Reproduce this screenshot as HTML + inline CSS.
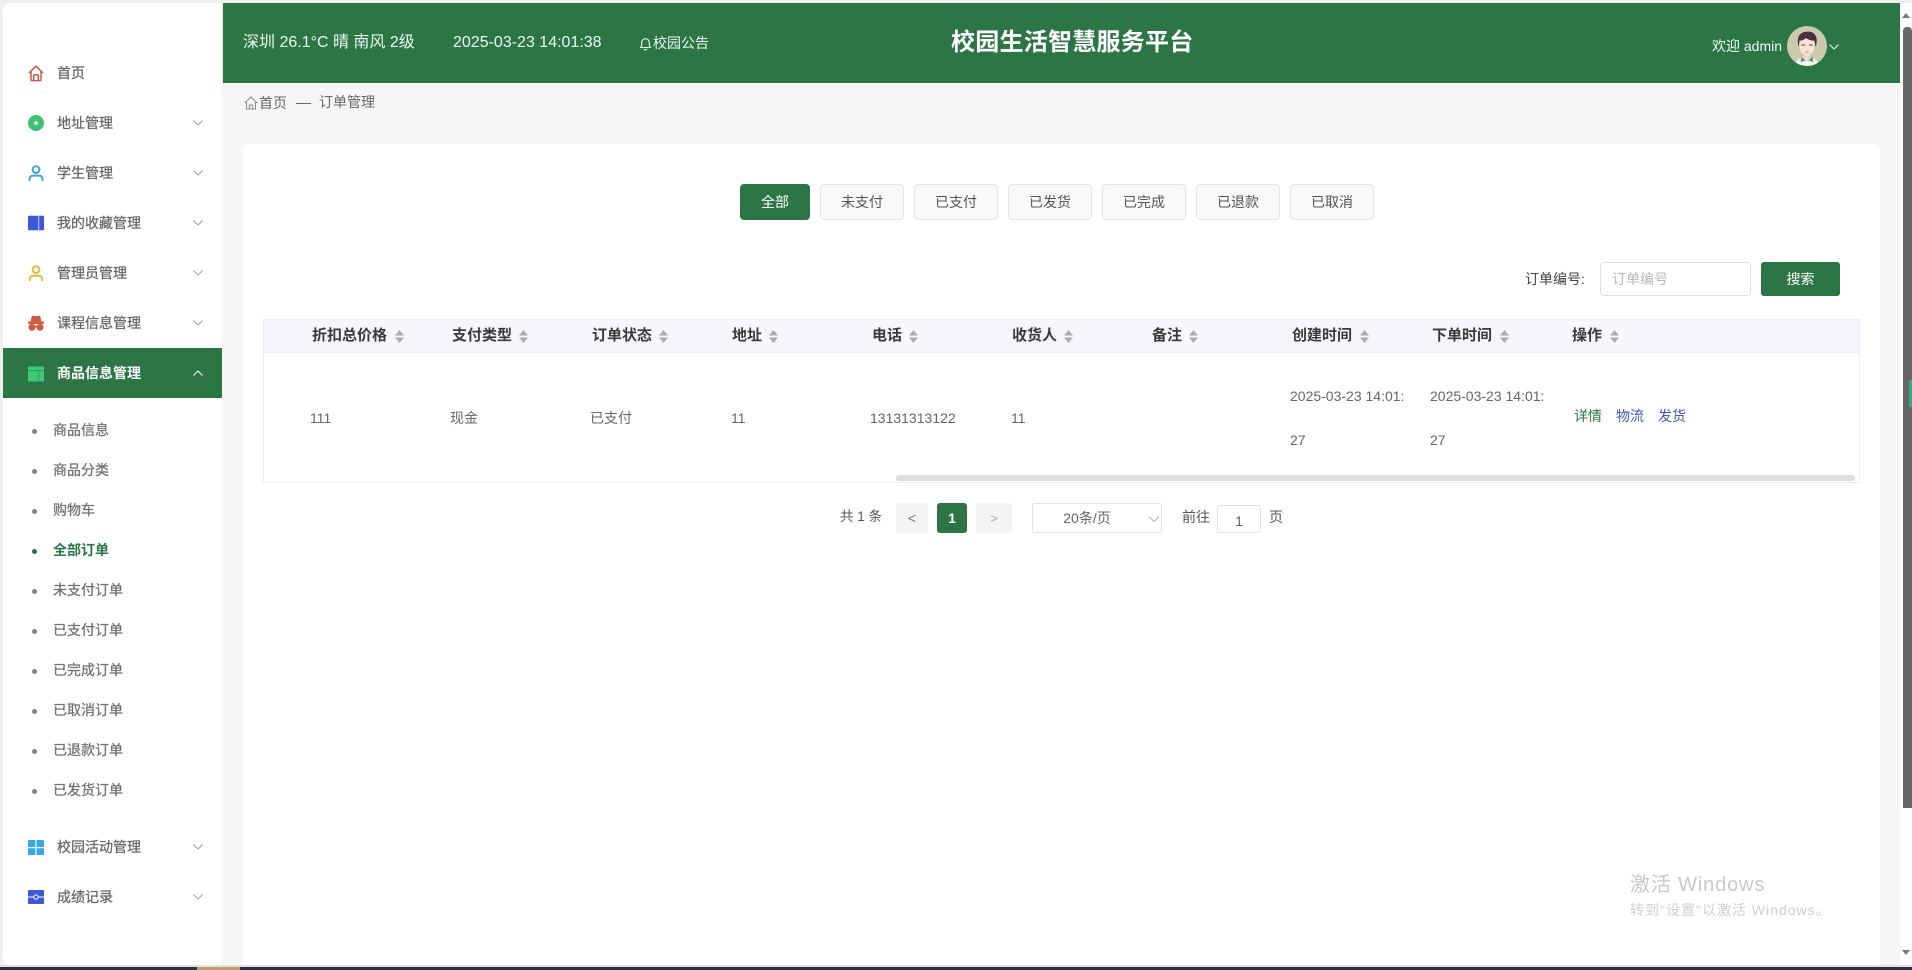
<!DOCTYPE html>
<html lang="zh-CN"><head><meta charset="utf-8"><title>校园生活智慧服务平台</title>
<style>
*{box-sizing:border-box;margin:0;padding:0}
html,body{width:1912px;height:970px;overflow:hidden;background:#f0f0f1;font-family:"Liberation Sans","Noto Sans CJK SC",sans-serif;font-size:14px;color:#606266}
.a{position:absolute;white-space:nowrap}
.t{position:absolute;white-space:nowrap;line-height:20px;height:20px}
.m{position:absolute;left:57px;line-height:20px;height:20px;color:#666;font-size:14px;white-space:nowrap;-webkit-text-stroke:.25px #666}
.ic{position:absolute;left:28px;width:16px;height:16px}
.ch{position:absolute;left:192px;width:12px;height:8px}
.s{position:absolute;left:53px;line-height:20px;height:20px;color:#707070;font-size:14px;white-space:nowrap;-webkit-text-stroke:.25px #707070}
.d{position:absolute;left:32px;width:5px;height:5px;border-radius:50%;background:#808080}
.b{position:absolute;top:184px;width:84px;height:36px;line-height:34px;text-align:center;background:#f9f9f9;border:1px solid #e4e5e7;border-radius:4px;color:#555;font-size:14px}
.h{position:absolute;top:326px;line-height:20px;font-size:15px;font-weight:700;color:#3a3a3a;white-space:nowrap}
.so{position:absolute;top:330px;width:9px;height:13px}
.c{position:absolute;line-height:20px;font-size:14px;color:#666;white-space:nowrap}
</style></head><body>

<!-- sidebar -->
<div class="a" style="left:3px;top:3px;width:219px;height:963px;background:#fff;border-radius:8px 0 0 8px"></div>
<svg class="ic" style="top:65px;height:17px" viewBox="0 0 16 17" fill="none" stroke="#c2594e" stroke-width="1.5"><path d="M1 8 8 1.2 15 8M3 6.5V14.6q0 1 1 1h8q1 0 1-1V6.5"/><path d="M5.7 15.5V11q0-1.2 1.2-1.2h2.2q1.2 0 1.2 1.2v4.5"/></svg>
<div class="m" style="top:63px">首页</div>
<svg class="ic" style="top:115px" viewBox="0 0 16 16"><circle cx="8" cy="8" r="8" fill="#3cc273"/><circle cx="8" cy="8" r="1.9" fill="#fff"/></svg>
<div class="m" style="top:113px">地址管理</div>
<svg class="ic" style="top:165px" viewBox="0 0 16 16" fill="none" stroke="#45a3de" stroke-width="2"><circle cx="8" cy="4.6" r="3.4"/><path d="M1.5 16v-1.5Q1.5 10.6 5.5 10.6h5q4 0 4 3.9V16"/></svg>
<div class="m" style="top:163px">学生管理</div>
<svg class="ic" style="top:215px" viewBox="0 0 16 16"><rect width="16" height="14.5" y=".8" rx="1" fill="#3f57d9"/><rect x="10.2" y=".8" width="1" height="14.5" fill="#c5cdf5"/></svg>
<div class="m" style="top:213px">我的收藏管理</div>
<svg class="ic" style="top:265px" viewBox="0 0 16 16" fill="none" stroke="#e0bb45" stroke-width="2"><circle cx="8" cy="4.6" r="3.4"/><path d="M1.8 16v-1.5Q1.8 10.8 5.5 10.8h5q3.7 0 3.7 3.7V16"/></svg>
<div class="m" style="top:263px">管理员管理</div>
<svg class="ic" style="top:315px" viewBox="0 0 16 16" fill="#cf5a45"><path d="M2.500 7 3.500 2Q4 .4 5.500.7L8 1.200l2.500-.5Q12 .4 12.500 2l1 5z"/><rect y="6.500" width="16" height="2.500" rx="1"/><circle cx="4" cy="12.300" r="3.500"/><circle cx="12" cy="12.300" r="3.500"/><rect x="6" y="10.500" width="4" height="2"/></svg>
<div class="m" style="top:313px">课程信息管理</div>
<div class="a" style="left:3px;top:348px;width:219px;height:50px;background:#2c7645"></div>
<svg class="ic" style="top:366px" viewBox="0 0 16 15"><rect width="16" height="15" fill="#3dc877"/><rect y="3.600" width="16" height="1" fill="#2c9a5c"/><rect x="10.500" y="4.600" width=".8" height="10.400" fill="#2c9a5c"/></svg>
<div class="m" style="top:363px;color:#fff;font-weight:700;-webkit-text-stroke:0">商品信息管理</div>

<svg class="ch" style="top:119px" viewBox="0 0 12 8" fill="none" stroke="#a0a0a0"><path d="M1.500 1.500 6 6l4.500-4.500"/></svg>
<svg class="ch" style="top:169px" viewBox="0 0 12 8" fill="none" stroke="#a0a0a0"><path d="M1.500 1.500 6 6l4.500-4.500"/></svg>
<svg class="ch" style="top:219px" viewBox="0 0 12 8" fill="none" stroke="#a0a0a0"><path d="M1.500 1.500 6 6l4.500-4.500"/></svg>
<svg class="ch" style="top:269px" viewBox="0 0 12 8" fill="none" stroke="#a0a0a0"><path d="M1.500 1.500 6 6l4.500-4.500"/></svg>
<svg class="ch" style="top:319px" viewBox="0 0 12 8" fill="none" stroke="#a0a0a0"><path d="M1.500 1.500 6 6l4.500-4.500"/></svg>
<svg class="ch" style="top:369px" viewBox="0 0 12 8" fill="none" stroke="#fff"><path d="M1.500 6.500 6 2l4.500 4.500"/></svg>

<div class="d" style="top:429px"></div><div class="s" style="top:420px">商品信息</div>
<div class="d" style="top:469px"></div><div class="s" style="top:460px">商品分类</div>
<div class="d" style="top:509px"></div><div class="s" style="top:500px">购物车</div>
<div class="d" style="top:549px;background:#2c7645"></div><div class="s" style="top:540px;color:#2c7645;font-weight:700;-webkit-text-stroke:0">全部订单</div>
<div class="d" style="top:589px"></div><div class="s" style="top:580px">未支付订单</div>
<div class="d" style="top:629px"></div><div class="s" style="top:620px">已支付订单</div>
<div class="d" style="top:669px"></div><div class="s" style="top:660px">已完成订单</div>
<div class="d" style="top:709px"></div><div class="s" style="top:700px">已取消订单</div>
<div class="d" style="top:749px"></div><div class="s" style="top:740px">已退款订单</div>
<div class="d" style="top:789px"></div><div class="s" style="top:780px">已发货订单</div>

<svg class="ic" style="top:840px;height:15px" viewBox="0 0 16 15"><path fill="#36a8e6" d="M0 1q0-1 1-1h6.300v7H0zM8.500 0H15q1 0 1 1v6H8.500zM0 8.200h7.300V15H1q-1 0-1-1zM8.500 8.200H16V14q0 1-1 1H8.500z"/></svg>
<div class="m" style="top:837px">校园活动管理</div>
<svg class="ch" style="top:843px" viewBox="0 0 12 8" fill="none" stroke="#a0a0a0"><path d="M1.500 1.500 6 6l4.500-4.500"/></svg>
<svg class="ic" style="top:890px;height:14px" viewBox="0 0 16 14"><rect width="16" height="14" rx="1" fill="#3f57d9"/><rect y="6.500" width="5.500" height="1" fill="#fff"/><rect x="10.500" y="6.500" width="5.500" height="1" fill="#fff"/><circle cx="8" cy="7" r="2.100" fill="none" stroke="#fff"/></svg>
<div class="m" style="top:887px">成绩记录</div>
<svg class="ch" style="top:893px" viewBox="0 0 12 8" fill="none" stroke="#a0a0a0"><path d="M1.500 1.500 6 6l4.500-4.500"/></svg>

<!-- main bg -->
<div class="a" style="left:222px;top:83px;width:1678px;height:882px;background:#f6f6f7"></div>

<!-- header -->
<div class="a" style="left:223px;top:3px;width:1677px;height:80px;background:#2c7645"></div>
<div class="t" style="left:243px;top:32px;font-size:16px;line-height:22px;height:22px;color:#eafaf0">深圳 26.1°C 晴 南风 2级</div>
<div class="t" style="left:453px;top:32px;font-size:16px;line-height:22px;height:22px;color:#eafaf0">2025-03-23 14:01:38</div>
<svg class="a" style="left:639px;top:37px" width="13" height="14" viewBox="0 0 13 14" fill="none" stroke="#eafaf0" stroke-width="1.100"><path d="M1.500 10.500h10L10.300 8.500V5.500a3.800 3.800 0 0 0-7.600 0v3z"/><path d="M4.800 12.700h3.400"/></svg>
<div class="t" style="left:653px;top:33px;color:#eafaf0">校园公告</div>
<div class="t" style="left:951px;top:26px;font-size:24px;font-weight:700;line-height:34px;height:34px;color:#fff;letter-spacing:.25px">校园生活智慧服务平台</div>
<div class="t" style="left:1712px;top:36px;color:#eafaf0">欢迎 admin</div>
<svg class="a" style="left:1787px;top:26px" width="40" height="40" viewBox="0 0 40 40">
<defs><clipPath id="cp"><circle cx="20" cy="20" r="20"/></clipPath></defs>
<g clip-path="url(#cp)"><rect width="40" height="40" fill="#cbc9ae"/>
<path d="M8 40q1-7 8-8.500h8q7 1.500 8 8.500z" fill="#f6f7f3"/>
<path d="M14.500 31l5.500 4 5.500-4 1 5-6.500-2-6.500 2z" fill="#4d9a78"/>
<rect x="17" y="25" width="6" height="8" fill="#f3d6c8"/>
<ellipse cx="20" cy="20" rx="7.500" ry="9.500" fill="#f9e2d6"/>
<path d="M11.500 21q-3-13 6-15 10-2 12 6 .800 4-1 9l-1-6.500q-5 .5-8.500-2.500-3 3-6.500 2.500z" fill="#4b2f40"/>
<path d="M14.500 19h3.500M22 19h3.500" stroke="#5a3a46" stroke-width="1"/>
<path d="M18.500 26h3" stroke="#d77" stroke-width="1"/></g></svg>
<svg class="a" style="left:1828px;top:43px" width="12" height="8" viewBox="0 0 12 8" fill="none" stroke="#eafaf0"><path d="M1.500 1.500 6 6l4.500-4.500"/></svg>

<!-- breadcrumb -->
<svg class="a" style="left:244px;top:96px" width="14" height="14" viewBox="0 0 14 14" fill="none" stroke="#8a8a8a"><path d="M.8 7 7 1l6.200 6M2.500 6v7h9V6M5.300 13V9h3.400v4"/></svg>
<div class="t" style="left:259px;top:93px;color:#666">首页</div>
<div class="a" style="left:296px;top:103px;width:15px;height:1px;background:#666"></div>
<div class="t" style="left:319px;top:92px;color:#666">订单管理</div>

<!-- card -->
<div class="a" style="left:243px;top:144px;width:1637px;height:821px;background:#fff;border-radius:6px 6px 0 0"></div>

<div class="b" style="left:740px;width:70px;background:#2c7645;border-color:#2c7645;color:#fff">全部</div>
<div class="b" style="left:820px">未支付</div>
<div class="b" style="left:914px">已支付</div>
<div class="b" style="left:1008px">已发货</div>
<div class="b" style="left:1102px">已完成</div>
<div class="b" style="left:1196px">已退款</div>
<div class="b" style="left:1290px">已取消</div>

<div class="t" style="left:1525px;top:269px;color:#444">订单编号:</div>
<div class="a" style="left:1600px;top:262px;width:151px;height:34px;border:1px solid #dcdfe6;border-radius:4px;background:#fff;line-height:32px;padding-left:11px;color:#b8b8b8">订单编号</div>
<div class="a" style="left:1761px;top:262px;width:79px;height:34px;background:#2c7645;border-radius:3px;color:#fff;text-align:center;line-height:34px">搜索</div>

<!-- table -->
<div class="a" style="left:263px;top:319px;width:1597px;height:164px;border:1px solid #edeff3;background:#fff"></div>
<div class="a" style="left:264px;top:320px;width:1595px;height:33px;background:#f6f7fb;border-bottom:1px solid #edeff3"></div>
<div class="h" style="left:312px">折扣总价格</div><svg class="so" style="left:395px" viewBox="0 0 9 13" fill="#a8acb3"><path d="M4.500 0 9 5.500H0zM0 7.500h9L4.500 13z"/></svg>
<div class="h" style="left:452px">支付类型</div><svg class="so" style="left:519px" viewBox="0 0 9 13" fill="#a8acb3"><path d="M4.500 0 9 5.500H0zM0 7.500h9L4.500 13z"/></svg>
<div class="h" style="left:592px">订单状态</div><svg class="so" style="left:659px" viewBox="0 0 9 13" fill="#a8acb3"><path d="M4.500 0 9 5.500H0zM0 7.500h9L4.500 13z"/></svg>
<div class="h" style="left:732px">地址</div><svg class="so" style="left:769px" viewBox="0 0 9 13" fill="#a8acb3"><path d="M4.500 0 9 5.500H0zM0 7.500h9L4.500 13z"/></svg>
<div class="h" style="left:872px">电话</div><svg class="so" style="left:909px" viewBox="0 0 9 13" fill="#a8acb3"><path d="M4.500 0 9 5.500H0zM0 7.500h9L4.500 13z"/></svg>
<div class="h" style="left:1012px">收货人</div><svg class="so" style="left:1064px" viewBox="0 0 9 13" fill="#a8acb3"><path d="M4.500 0 9 5.500H0zM0 7.500h9L4.500 13z"/></svg>
<div class="h" style="left:1152px">备注</div><svg class="so" style="left:1189px" viewBox="0 0 9 13" fill="#a8acb3"><path d="M4.500 0 9 5.500H0zM0 7.500h9L4.500 13z"/></svg>
<div class="h" style="left:1292px">创建时间</div><svg class="so" style="left:1360px" viewBox="0 0 9 13" fill="#a8acb3"><path d="M4.500 0 9 5.500H0zM0 7.500h9L4.500 13z"/></svg>
<div class="h" style="left:1432px">下单时间</div><svg class="so" style="left:1500px" viewBox="0 0 9 13" fill="#a8acb3"><path d="M4.500 0 9 5.500H0zM0 7.500h9L4.500 13z"/></svg>
<div class="h" style="left:1572px">操作</div><svg class="so" style="left:1610px" viewBox="0 0 9 13" fill="#a8acb3"><path d="M4.500 0 9 5.500H0zM0 7.500h9L4.500 13z"/></svg>

<div class="c" style="left:310px;top:408px">111</div>
<div class="c" style="left:450px;top:408px">现金</div>
<div class="c" style="left:590px;top:408px">已支付</div>
<div class="c" style="left:731px;top:408px">11</div>
<div class="c" style="left:870px;top:408px">13131313122</div>
<div class="c" style="left:1011px;top:408px">11</div>
<div class="c" style="left:1290px;top:386px">2025-03-23 14:01:</div>
<div class="c" style="left:1290px;top:430px">27</div>
<div class="c" style="left:1430px;top:386px">2025-03-23 14:01:</div>
<div class="c" style="left:1430px;top:430px">27</div>
<div class="c" style="left:1574px;top:406px;color:#2c7645">详情</div>
<div class="c" style="left:1616px;top:406px;color:#3f57c9">物流</div>
<div class="c" style="left:1658px;top:406px;color:#3f57c9">发货</div>
<div class="a" style="left:896px;top:475px;width:959px;height:6px;background:#dedede;border-radius:3px"></div>

<!-- pagination -->
<div class="t" style="left:840px;top:507px;color:#555;font-size:13.500px">共 1 条</div>
<div class="a" style="left:896px;top:503px;width:32px;height:30px;background:#f4f4f5;border-radius:2px;text-align:center;line-height:30px;color:#777">&lt;</div>
<div class="a" style="left:937px;top:503px;width:30px;height:30px;background:#2c7645;border-radius:3px;text-align:center;line-height:30px;color:#fff;font-weight:700">1</div>
<div class="a" style="left:976px;top:503px;width:36px;height:30px;background:#f4f4f5;border-radius:2px;text-align:center;line-height:30px;color:#b5b5b5">&gt;</div>
<div class="a" style="left:1032px;top:503px;width:130px;height:30px;border:1px solid #e0e2e6;border-radius:3px;background:#fff;text-align:center;line-height:28px;color:#666;padding-right:20px">20条/页</div>
<svg class="a" style="left:1148px;top:515px" width="12" height="8" viewBox="0 0 12 8" fill="none" stroke="#b5b5b5"><path d="M1 1.500 6 6.500l5-5"/></svg>
<div class="t" style="left:1182px;top:507px;color:#555">前往</div>
<div class="a" style="left:1217px;top:505px;width:44px;height:28px;border:1px solid #e0e2e6;border-radius:3px;background:#fff;text-align:center;line-height:30px;color:#666">1</div>
<div class="t" style="left:1269px;top:507px;color:#555">页</div>

<!-- watermark -->
<div class="t" style="left:1630px;top:870px;font-size:20px;line-height:30px;height:30px;color:#c9c9c9;letter-spacing:.85px">激活 Windows</div>
<div class="t" style="left:1630px;top:900px;color:#cfcfcf;letter-spacing:1px">转到"设置"以激活 Windows。</div>

<!-- page scrollbar -->
<div class="a" style="left:1900px;top:3px;width:12px;height:962px;background:#fdfdfd"></div>
<div class="a" style="left:1903px;top:27px;width:9px;height:781px;background:#666;border-radius:4px 4px 0 0"></div>
<div class="a" style="left:1909px;top:380px;width:3px;height:27px;background:#3aa886"></div>
<div class="a" style="left:1902px;top:13px;width:0;height:0;border:4px solid transparent;border-bottom:5px solid #777;border-top:0"></div>
<div class="a" style="left:1902px;top:950px;width:0;height:0;border:4px solid transparent;border-top:5px solid #777;border-bottom:0"></div>
<!-- bottom edge -->
<div class="a" style="left:0;top:965px;width:1912px;height:2px;background:#dfe3e6"></div>
<div class="a" style="left:0;top:967px;width:1912px;height:3px;background:#2b3138"></div>
<div class="a" style="left:197px;top:967px;width:43px;height:3px;background:#c79a6c"></div>
</body></html>
